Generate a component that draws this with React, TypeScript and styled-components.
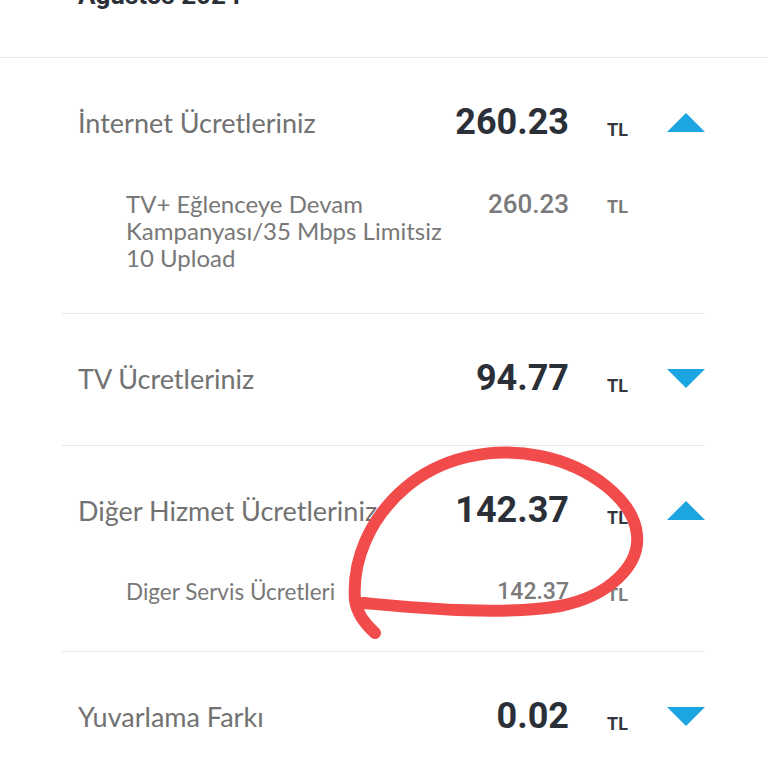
import * as React from 'react';
import styled, { createGlobalStyle } from 'styled-components';

interface SubItem { label: string[]; amount: string; size: number; amountSize: number }
interface Fee { title: string; amount: string; open: boolean; bottom: number; items: SubItem[] }

const fees: Fee[] = [
  {
    title: 'İnternet Ücretleriniz', amount: '260.23', open: true, bottom: 42,
    items: [{ label: ['TV+ Eğlenceye Devam', 'Kampanyası/35 Mbps Limitsiz', '10 Upload'], amount: '260.23', size: 24, amountSize: 26 }],
  },
  { title: 'TV Ücretleriniz', amount: '94.77', open: false, bottom: 48, items: [] },
  {
    title: 'Diğer Hizmet Ücretleriniz', amount: '142.37', open: true, bottom: 45,
    items: [{ label: ['Diger Servis Ücretleri'], amount: '142.37', size: 22.5, amountSize: 23 }],
  },
  { title: 'Yuvarlama Farkı', amount: '0.02', open: false, bottom: 48, items: [] },
];

const GlobalStyle = createGlobalStyle`
  html, body { margin: 0; padding: 0; background: #ffffff; }
  body { font-family: Lato, "Noto Sans", sans-serif; overflow: hidden; }
`;

const Page = styled.div`
  position: relative;
  width: 768px;
  height: 768px;
  overflow: hidden;
  background: #fff;
`;

const Header = styled.div`
  height: 57px;
  border-bottom: 1px solid #e9e9e9;
  padding-left: 78px;
  overflow: hidden;
`;

const Month = styled.div`
  margin-top: -20px;
  font-family: Roboto, sans-serif;
  font-weight: 700;
  font-size: 26px;
  line-height: 30px;
  color: #2b3038;
`;

const List = styled.div`
  margin-left: 62px;
  width: 643px;
`;

const Section = styled.div<{ $bottom: number }>`
  padding-top: 43px;
  padding-bottom: ${({ $bottom }) => $bottom}px;
  border-bottom: 1px solid #e6e6e6;
`;

const Row = styled.div`
  display: grid;
  grid-template-columns: 1fr auto 60px 38px;
  align-items: center;
  height: 40px;
  padding-left: 16px;
`;

const Title = styled.div`
  font-size: 27px;
  color: #727272;
  white-space: nowrap;
`;

const Amount = styled.div`
  font-family: Roboto, sans-serif;
  font-weight: 700;
  font-size: 36px;
  color: #2b3038;
  margin-right: 38px;
  text-align: right;
`;

const Currency = styled.div<{ $muted?: boolean }>`
  font-family: Roboto, sans-serif;
  font-weight: 700;
  font-size: 18px;
  color: ${({ $muted }) => ($muted ? '#7a7a7a' : '#333840')};
  padding-top: ${({ $muted }) => ($muted ? '6px' : '14px')};
`;

const SubList = styled.div`
  margin-top: 49px;
`;

const SubRow = styled.div`
  display: grid;
  grid-template-columns: 1fr auto 60px 38px;
  align-items: start;
  padding-left: 64px;
`;

const SubLabel = styled.div<{ $size: number }>`
  font-size: ${({ $size }) => $size}px;
  line-height: 27px;
  color: #787878;
`;

const SubAmount = styled.div<{ $size: number }>`
  font-family: Roboto, sans-serif;
  font-weight: 500;
  font-size: ${({ $size }) => $size}px;
  line-height: 28px;
  color: #7a7a7a;
  margin-right: 38px;
  text-align: right;
`;

const Scribble = styled.svg`
  position: absolute;
  left: 0;
  top: 0;
  pointer-events: none;
`;

function Caret({ up }: { up: boolean }) {
  return (
    <svg width="38" height="19" viewBox="0 0 38 19">
      <polygon points={up ? '19,0 38,19 0,19' : '0,0 38,0 19,19'} fill="#1ba6e1" />
    </svg>
  );
}

export default function App() {
  return (
    <Page>
      <GlobalStyle />
      <Header>
        <Month>Ağustos 2024</Month>
      </Header>
      <List>
        {fees.map((fee) => (
          <Section key={fee.title} $bottom={fee.bottom}>
            <Row>
              <Title>{fee.title}</Title>
              <Amount>{fee.amount}</Amount>
              <Currency>TL</Currency>
              <Caret up={fee.open} />
            </Row>
            {fee.open && (
              <SubList>
                {fee.items.map((item) => (
                  <SubRow key={item.amount + item.label[0]}>
                    <SubLabel $size={item.size}>
                      {item.label.map((line) => (
                        <div key={line}>{line}</div>
                      ))}
                    </SubLabel>
                    <SubAmount $size={item.amountSize}>{item.amount}</SubAmount>
                    <Currency $muted>TL</Currency>
                    <span />
                  </SubRow>
                ))}
              </SubList>
            )}
          </Section>
        ))}
      </List>
      <Scribble width="768" height="768" viewBox="0 0 768 768">
        <path
          d="M 363 603 C 420 608, 500 616, 560 606 C 610 596, 640 565, 637 535 C 634 500, 590 466, 540 456 C 490 446, 440 458, 405 488 C 370 518, 352 560, 355 600 C 357 615, 366 625, 375 633"
          fill="none"
          stroke="#f24b4b"
          strokeWidth="12"
          strokeLinecap="round"
          strokeLinejoin="round"
        />
      </Scribble>
    </Page>
  );
}
